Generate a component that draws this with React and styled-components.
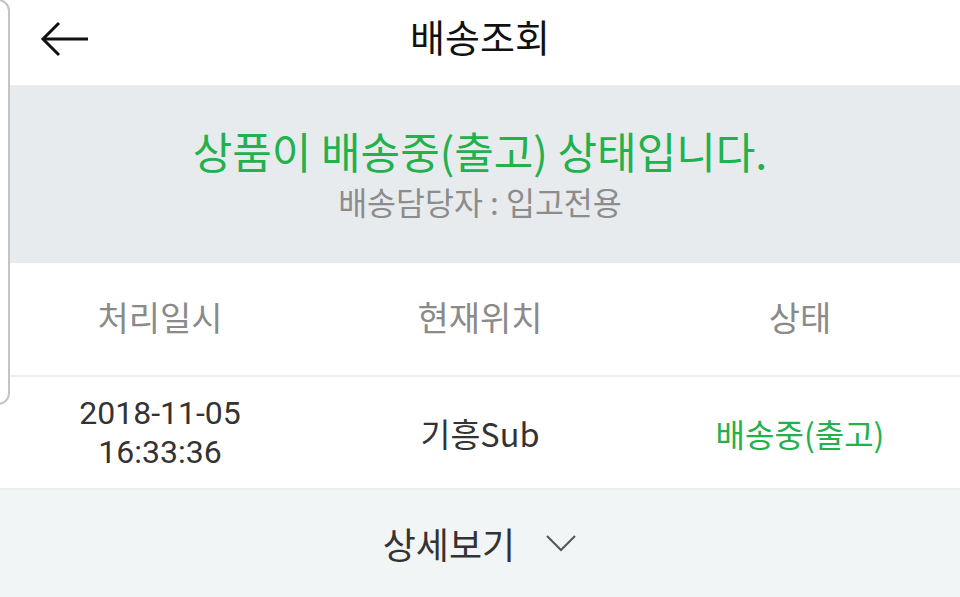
import styled, { createGlobalStyle } from "styled-components";

const GlobalStyle = createGlobalStyle`
  * { box-sizing: border-box; }
  body {
    margin: 0;
    background: #ffffff;
    font-family: "Noto Sans CJK KR", "Noto Sans", sans-serif;
  }
`;

const green = "#22b14c";

export default function App() {
  return (
    <Page>
      <GlobalStyle />
      <Header>
        <BackBtn aria-label="back">
          <svg width="50" height="36" viewBox="0 0 50 36" fill="none">
            <path d="M3 18H48" stroke="#111" strokeWidth="3" />
            <path d="M19 2L3 18L19 34" stroke="#111" strokeWidth="3" />
          </svg>
        </BackBtn>
        <Title>배송조회</Title>
      </Header>

      <Banner>
        <Status>상품이 배송중(출고) 상태입니다.</Status>
        <Courier>배송담당자 : 입고전용</Courier>
      </Banner>

      <HeadRow>
        <HeadCell>처리일시</HeadCell>
        <HeadCell>현재위치</HeadCell>
        <HeadCell>상태</HeadCell>
      </HeadRow>

      <DataRow>
        <Cell>
          <DateLine>2018-11-05</DateLine>
          <DateLine>16:33:36</DateLine>
        </Cell>
        <Cell>기흥Sub</Cell>
        <Cell $green>배송중(출고)</Cell>
      </DataRow>

      <Footer>
        <MoreText>상세보기</MoreText>
        <svg width="32" height="18" viewBox="0 0 32 18" fill="none">
          <path d="M2 2L16 16L30 2" stroke="#555" strokeWidth="2" />
        </svg>
      </Footer>

      <EdgePanel />
    </Page>
  );
}

const Page = styled.div`
  position: relative;
  width: 960px;
  height: 597px;
  overflow: hidden;
  display: flex;
  flex-direction: column;
`;

const Header = styled.header`
  position: relative;
  height: 86px;
  display: flex;
  align-items: center;
  justify-content: center;
  border-bottom: 1px solid #eeeeee;
`;

const BackBtn = styled.button`
  position: absolute;
  left: 40px;
  top: 21px;
  padding: 0;
  border: 0;
  background: none;
  display: flex;
`;

const Title = styled.h1`
  margin: 0 0 14px;
  font-size: 38px;
  line-height: 48px;
  font-weight: 400;
  color: #111;
`;

const Banner = styled.section`
  height: 177px;
  background: #e8ebee;
  display: flex;
  flex-direction: column;
  align-items: center;
  justify-content: center;
  padding-bottom: 4px;
`;

const Status = styled.p`
  margin: 0;
  font-size: 43px;
  line-height: 50px;
  color: ${green};
`;

const Courier = styled.p`
  margin: 6px 0 0;
  font-size: 31.5px;
  line-height: 40px;
  color: #8c8c8c;
`;

const HeadRow = styled.div`
  height: 114px;
  display: grid;
  grid-template-columns: repeat(3, 1fr);
  align-items: center;
  border-bottom: 2px solid #eeeeee;
`;

const HeadCell = styled.div`
  text-align: center;
  font-size: 34px;
  color: #8a8a8a;
  padding-bottom: 6px;
`;

const DataRow = styled.div`
  height: 113px;
  display: grid;
  grid-template-columns: repeat(3, 1fr);
  align-items: center;
  border-bottom: 2px solid #ebeeef;
`;

const Cell = styled.div`
  text-align: center;
  font-size: ${(p) => (p.$green ? "32px" : "32.5px")};
  line-height: 40px;
  color: ${(p) => (p.$green ? green : "#333")};
`;

const DateLine = styled.div`
  font-family: Roboto, "Noto Sans", sans-serif;
  font-size: 32px;
  line-height: 39px;
`;

const Footer = styled.div`
  flex: 1;
  background: #f2f5f6;
  display: flex;
  align-items: center;
  justify-content: center;
  gap: 30px;
  padding-bottom: 2px;
`;

const MoreText = styled.span`
  font-size: 36px;
  color: #333;
`;

const EdgePanel = styled.div`
  position: absolute;
  left: -30px;
  top: -1px;
  width: 40px;
  height: 406px;
  background: #ffffff;
  border: 2px solid #c4c4c4;
  border-radius: 12px;
`;
